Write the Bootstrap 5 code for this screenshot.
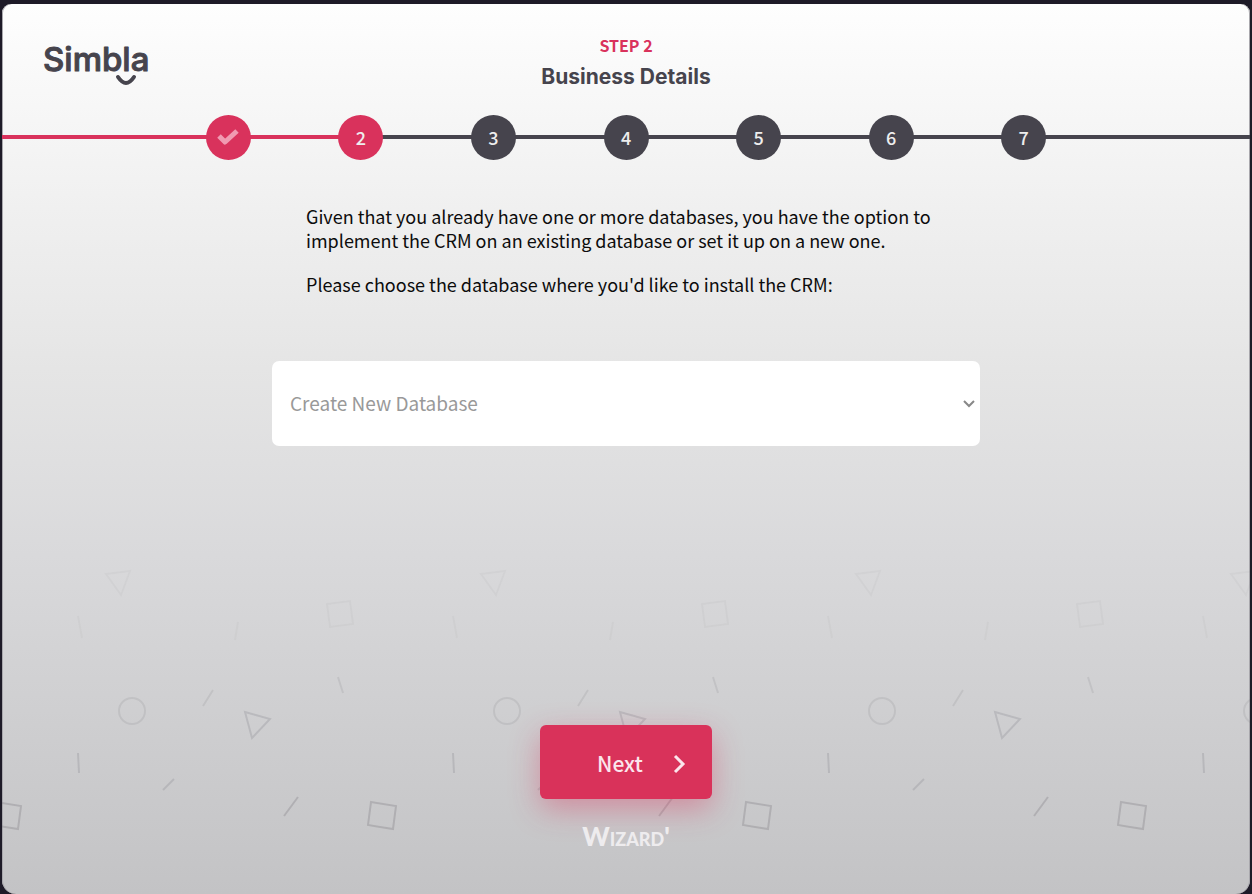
<!DOCTYPE html>
<html lang="en">
<head>
<meta charset="utf-8">
<meta name="viewport" content="width=device-width, initial-scale=1">
<title>Simbla Wizard - Business Details</title>
<link href="https://cdn.jsdelivr.net/npm/bootstrap@5.3.0/dist/css/bootstrap.min.css" rel="stylesheet">
<style>
  :root { --pink: #d9325c; --ink: #46444d; }
  body { background: #1e1b28; font-family: "Noto Sans CJK SC", "Open Sans", sans-serif; color: #0c0c0c; padding: 4px 2px 0; }
  .wizard { min-height: calc(100vh - 4px); border-radius: 9px 9px 14px 14px; box-shadow: inset 1px 0 #a9a8ad, inset -1px 0 #a9a8ad;
    background: linear-gradient(#fefefe, #f3f3f3 18%, #e5e5e5 41%, #d9d9db 62%, #c3c3c5); }
  .confetti { height: 340px; z-index: 0; }
  .wizard-head { height: 111px; }
  .brand { left: 41px; top: 32px; }
  .brand text { font-family: Inter, sans-serif; font-weight: 500; font-size: 33px; }
  .step-label { font-size: 16px; line-height: 24px; font-weight: 700; color: var(--pink); padding-top: 29px; }
  .step-title { font-family: Inter, sans-serif; font-size: 21px; line-height: 28px; font-weight: 700; color: var(--ink); margin-top: 6px; }
  .track { background: linear-gradient(90deg, var(--pink) calc(50% - 265px), var(--ink) 0) 0 20px / 100% 4px no-repeat; }
  .steps { max-width: 928px; }
  .steps li { flex: 1 1 0; }
  .dot { width: 45px; height: 45px; background: var(--ink); color: #eee; font-size: 18px; line-height: 24px; font-weight: 500; padding-bottom: 2px; }
  .dot.on { background: var(--pink); }
  .step-body { max-width: 708px; margin-top: 44px; }
  .intro { padding: 0 34px; font-size: 18px; line-height: 24px; }
  .intro p { margin-bottom: 20px; }
  .db-select { height: 85px; margin-top: 65px; border: 0; border-radius: 7px; padding: 0 32px 0 18px; font-size: 19px; color: #999; background-color: #fff;
    background-image: url("data:image/svg+xml,%3Csvg xmlns='http://www.w3.org/2000/svg' viewBox='0 0 12 8'%3E%3Cpath d='M1 1l5 5 5-5' fill='none' stroke='%23888' stroke-width='2'/%3E%3C/svg%3E");
    background-position: right 5px center; background-size: 12px 8px; }
  .wizard-foot { padding-bottom: 43px; }
  .btn-next { width: 172px; height: 74px; padding: 4px 26px 0 57px; border: 0; border-radius: 6px; font-size: 21px; font-weight: 500; color: #fbe6ec;
    background: #d9325a; box-shadow: 0 10px 30px rgba(217, 50, 90, .4); }
  .btn-next:hover { background: #c52a50; color: #fff; }
  .signature { margin-top: 22px; font-size: 26px; line-height: 30px; font-family: Lato, sans-serif; font-weight: 900; font-variant: small-caps; color: #eeecee; }
</style>
</head>
<body>
<main class="wizard position-relative overflow-hidden d-flex flex-column">
  <svg class="confetti position-absolute bottom-0 start-0 w-100" aria-hidden="true">
    <defs>
      <pattern id="shapes" width="375" height="340" patternUnits="userSpaceOnUse">
        <g fill="none" stroke="#77767c" stroke-width="2">
          <g stroke-opacity=".06">
            <path d="M104 20l24-3-9 24z"/>
            <path d="M325 50l23-3 3 23-23 3z"/>
            <path d="M76 62l4 22M236 68l-3 18"/>
          </g>
          <g stroke-opacity=".16">
            <circle cx="130" cy="157" r="13"/>
            <path d="M211 136l-10 16M336 123l5 16"/>
          </g>
          <g stroke-opacity=".23">
            <path d="M243 158l25 7-18 19z"/>
            <path d="M76 199l1 20M172 225l-11 11"/>
          </g>
          <g stroke-opacity=".3">
            <path d="M296 243l-14 19"/>
            <path d="M369 248l24 4-3 23-24-4zM-6 248l25 4-3 23-25-4z"/>
          </g>
        </g>
      </pattern>
    </defs>
    <rect width="100%" height="340" fill="url(#shapes)"/>
  </svg>

  <header class="wizard-head position-relative text-center">
    <svg class="brand position-absolute" width="120" height="52" viewBox="0 0 120 52" role="img" aria-label="Simbla">
      <text x="0" y="35" fill="#46444d" stroke="#46444d" stroke-width="1" stroke-linejoin="round">Simbla</text>
      <path d="M75 41q8 12 16 0" fill="none" stroke="#46444d" stroke-width="4" stroke-linecap="round"/>
    </svg>
    <div class="step-label">STEP 2</div>
    <h1 class="step-title mb-0">Business Details</h1>
  </header>

  <nav class="track position-relative" aria-label="Progress">
    <ol class="steps list-unstyled d-flex mx-auto mb-0">
      <li class="d-flex justify-content-center"><span class="dot on rounded-circle d-flex align-items-center justify-content-center">
        <svg width="24" height="20" viewBox="0 0 24 20" role="img" aria-label="Done"><path d="M3 9l6 6L21 4" fill="none" stroke="#f09ab1" stroke-width="5" stroke-linejoin="round"/></svg></span></li>
      <li class="d-flex justify-content-center" aria-current="step"><span class="dot on rounded-circle d-flex align-items-center justify-content-center">2</span></li>
      <li class="d-flex justify-content-center"><span class="dot rounded-circle d-flex align-items-center justify-content-center">3</span></li>
      <li class="d-flex justify-content-center"><span class="dot rounded-circle d-flex align-items-center justify-content-center">4</span></li>
      <li class="d-flex justify-content-center"><span class="dot rounded-circle d-flex align-items-center justify-content-center">5</span></li>
      <li class="d-flex justify-content-center"><span class="dot rounded-circle d-flex align-items-center justify-content-center">6</span></li>
      <li class="d-flex justify-content-center"><span class="dot rounded-circle d-flex align-items-center justify-content-center">7</span></li>
    </ol>
  </nav>

  <form class="position-relative flex-grow-1 d-flex flex-column">
    <div class="step-body w-100 mx-auto">
      <div class="intro">
        <p>Given that you already have one or more databases, you have the option to implement the CRM on an existing database or set it up on a new one.</p>
        <p class="mb-0"><label for="database">Please choose the database where you'd like to install the CRM:</label></p>
      </div>
      <select id="database" class="db-select form-select">
        <option selected>Create New Database</option>
      </select>
    </div>
    <div class="wizard-foot mt-auto d-flex flex-column align-items-center">
      <button type="button" class="btn btn-next d-flex align-items-center justify-content-between">Next
        <svg width="14" height="20" viewBox="0 0 14 20" aria-hidden="true"><path d="M3 2l8 8-8 8" fill="none" stroke="#fbe6ec" stroke-width="3"/></svg>
      </button>
      <div class="signature">Wizard'</div>
    </div>
  </form>
</main>
<script src="https://cdn.jsdelivr.net/npm/bootstrap@5.3.0/dist/js/bootstrap.bundle.min.js"></script>
</body>
</html>
